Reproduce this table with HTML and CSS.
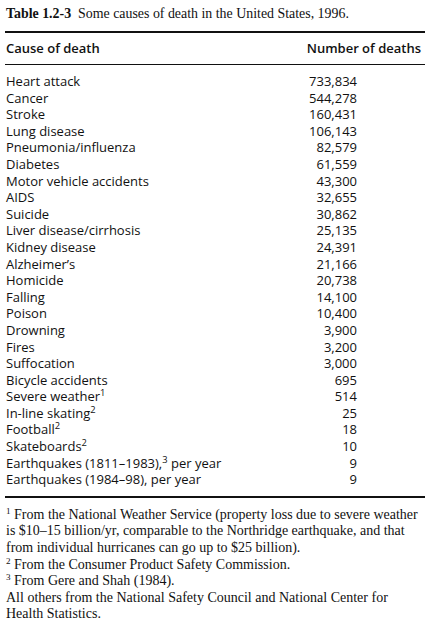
FILE: index.html
```html
<!DOCTYPE html>
<html lang="en">
<head>
  <meta charset="UTF-8"/>
  <meta name="viewport" content="width=device-width,initial-scale=1"/>
  <title>Table 1.2-3</title>
  <link rel="stylesheet" href="styles.css">
</head>
<body>

  <div id="page">
    <p class="caption"><b>Table 1.2-3</b>&nbsp;&nbsp;Some causes of death in the United States, 1996.</p>

    <table class="deaths">
      <thead>
        <tr><th class="cause">Cause of death</th><th class="num">Number of deaths</th></tr>
      </thead>
      <tbody>
        <tr class="first"><td>Heart attack</td><td class="n">733,834</td></tr>
        <tr><td>Cancer</td><td class="n">544,278</td></tr>
        <tr><td>Stroke</td><td class="n">160,431</td></tr>
        <tr><td>Lung disease</td><td class="n">106,143</td></tr>
        <tr><td>Pneumonia/influenza</td><td class="n">82,579</td></tr>
        <tr><td>Diabetes</td><td class="n">61,559</td></tr>
        <tr><td>Motor vehicle accidents</td><td class="n">43,300</td></tr>
        <tr><td>AIDS</td><td class="n">32,655</td></tr>
        <tr><td>Suicide</td><td class="n">30,862</td></tr>
        <tr><td>Liver disease/cirrhosis</td><td class="n">25,135</td></tr>
        <tr><td>Kidney disease</td><td class="n">24,391</td></tr>
        <tr><td>Alzheimer’s</td><td class="n">21,166</td></tr>
        <tr><td>Homicide</td><td class="n">20,738</td></tr>
        <tr><td>Falling</td><td class="n">14,100</td></tr>
        <tr><td>Poison</td><td class="n">10,400</td></tr>
        <tr><td>Drowning</td><td class="n">3,900</td></tr>
        <tr><td>Fires</td><td class="n">3,200</td></tr>
        <tr><td>Suffocation</td><td class="n">3,000</td></tr>
        <tr><td>Bicycle accidents</td><td class="n">695</td></tr>
        <tr><td>Severe weather<sup>1</sup></td><td class="n">514</td></tr>
        <tr><td>In-line skating<sup>2</sup></td><td class="n">25</td></tr>
        <tr><td>Football<sup>2</sup></td><td class="n">18</td></tr>
        <tr><td>Skateboards<sup>2</sup></td><td class="n">10</td></tr>
        <tr><td>Earthquakes (1811–1983),<sup>3</sup> per year</td><td class="n">9</td></tr>
        <tr class="last"><td>Earthquakes (1984–98), per year</td><td class="n">9</td></tr>
      </tbody>
    </table>

    <div class="notes">
      <p><sup>1</sup> From the National Weather Service (property loss due to severe weather is $10–15 billion/yr, comparable to the Northridge earthquake, and that from individual hurricanes can go up to $25 billion).</p>
      <p><sup>2</sup> From the Consumer Product Safety Commission.</p>
      <p><sup>3</sup> From Gere and Shah (1984).</p>
      <p>All others from the National Safety Council and National Center for Health Statistics.</p>
    </div>
  </div>

</body>
</html>
```

FILE: styles.css
```css
* {
  box-sizing: border-box;
}
body {
  margin: 0;
  background: #fff;
  color: #111;
}

#page {
  width: 420px;
  margin-left: 5px;
  padding-top: 5px;
}

.caption {
  margin: 0 0 0 1px;
  font-family: 'Liberation Serif', serif;
  font-size: 13.9px;
  line-height: 18px;
}

.deaths {
  width: 100%;
  margin-top: 8px;
  border-collapse: collapse;
  font-family: 'Open Sans', sans-serif;
  font-size: 13px;
}

.deaths thead tr {
  border-top: 2px solid #111;
  border-bottom: 1.5px solid #111;
}

.deaths th {
  font-weight: 600;
  padding: 7px 0 8px;
  line-height: 16px;
}
.deaths th.cause {
  text-align: left;
  padding-left: 1px;
}
.deaths th.num {
  text-align: right;
  padding-right: 4px;
}

.deaths td {
  padding: 0 0 0 1px;
  line-height: 16.6px;
  white-space: nowrap;
}
.deaths td.n {
  text-align: right;
  padding-right: 68px;
}
.deaths tr.first td {
  padding-top: 8px;
}
.deaths tr.last td {
  padding-bottom: 8px;
}
.deaths tbody tr.last {
  border-bottom: 2px solid #111;
}

sup {
  font-size: 0.72em;
  line-height: 0;
  vertical-align: 0.5em;
}

.notes {
  margin-top: 9px;
  padding-left: 1px;
  font-family: 'Liberation Serif', serif;
  font-size: 14px;
  line-height: 16.6px;
}
.notes p {
  margin: 0;
}
.notes sup {
  font-size: 0.65em;
}
```
